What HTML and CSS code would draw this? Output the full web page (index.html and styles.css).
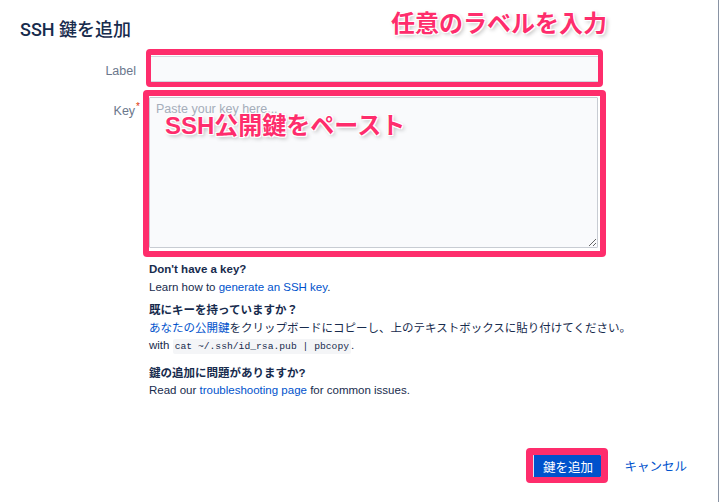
FILE: index.html
```html
<!DOCTYPE html>
<html>
<head>
    <meta charset="utf-8">
    <title>SSH 鍵を追加</title>
    <link rel="stylesheet" href="styles.css">
</head>
<body>
    <div class="dialog">
        <h1 class="dialog-title">SSH 鍵を追加</h1>
        <div class="note note-label">任意のラベルを入力</div>

        <form class="key-form">
            <label class="field-label label-row">Label</label>
            <div class="highlight highlight-label">
                <input type="text" class="text-input">
            </div>

            <label class="field-label">Key<span class="required">*</span></label>
            <div class="highlight highlight-key">
                <textarea class="key-input" placeholder="Paste your key here..."></textarea>
                <div class="note note-key">SSH公開鍵をペースト</div>
            </div>

            <div class="help">
                <p><strong>Don't have a key?</strong><br>
                Learn how to <a href="#">generate an SSH key</a>.</p>
                <p><strong>既にキーを持っていますか？</strong><br>
                <a href="#">あなたの公開鍵</a>をクリップボードにコピーし、上のテキストボックスに貼り付けてください。<br>
                with <code>cat ~/.ssh/id_rsa.pub | pbcopy</code>.</p>
                <p class="last"><strong>鍵の追加に問題がありますか?</strong><br>
                Read our <a href="#">troubleshooting page</a> for common issues.</p>
            </div>
        </form>

        <div class="dialog-footer">
            <div class="highlight highlight-button">
                <button class="button-primary">鍵を追加</button>
            </div>
            <a href="#" class="button-link">キャンセル</a>
        </div>
    </div>
</body>
</html>
```

FILE: styles.css
```css
body {
    margin: 0;
    background: #fff;
    font-family: "Liberation Sans", "Noto Sans CJK JP", sans-serif;
    color: #172b4d;
}
.dialog {
    position: relative;
    width: 719px;
    height: 502px;
    box-sizing: border-box;
    border-right: 1px solid #8993a4;
    display: flex;
    flex-direction: column;
}
.dialog-title {
    margin: 19px 0 0 20px;
    font-family: Roboto, "Noto Sans CJK JP", sans-serif;
    font-size: 18px;
    line-height: 22px;
    font-weight: 500;
    color: #172b4d;
}
.note {
    position: absolute;
    font-size: 24px;
    line-height: 24px;
    font-weight: 700;
    color: #fe2d6c;
    white-space: nowrap;
    text-shadow: -1px -1px 0 #fff, 1px -1px 0 #fff, -1px 1px 0 #fff, 1px 1px 0 #fff,
        0 0 3px #fff, 2px 2px 4px rgba(0, 0, 0, 0.3);
}
.note-label {
    left: 391px;
    top: 12px;
}
.note-key {
    left: 16px;
    top: 18px;
}
.key-form {
    display: grid;
    grid-template-columns: 136px 463px;
    column-gap: 7px;
    margin-top: 8px;
    font-size: 12.5px;
}
.field-label {
    text-align: right;
    color: #6b778c;
    padding-top: 14px;
}
.label-row {
    padding-top: 15px;
}
.required {
    color: #de350b;
    font-size: 10px;
    vertical-align: 5px;
    margin-right: -4px;
    margin-left: 1px;
}
.highlight {
    border: 6px solid #fe2d6c;
    border-radius: 4px;
    background: #fff;
}
.highlight-label {
    margin: 0 3px;
    border-width: 6px 5px 5px 5px;
    padding: 1px 0 0 0;
}
.highlight-key {
    position: relative;
    margin-top: 3px;
    padding: 1px 2px 3px 0;
}
.text-input {
    display: block;
    width: 100%;
    height: 26px;
    box-sizing: border-box;
    border: 1px solid #d3d7de;
    border-width: 1px 0 1px 0;
    background: #f9fafc;
    font: inherit;
}
.key-input {
    display: block;
    width: 449px;
    height: 151px;
    box-sizing: border-box;
    border: 1px solid #c8ccd3;
    border-radius: 1px;
    background: #f9fafc;
    padding: 4px 6px;
    font-family: inherit;
    font-size: 12.5px;
    resize: vertical;
}
.key-input::placeholder {
    color: #a5adba;
}
.help {
    grid-column: 2;
    margin-left: 6px;
    padding-top: 4px;
    font-size: 11.5px;
    line-height: 17.5px;
}
.help p {
    margin: 0 0 6px 0;
    white-space: nowrap;
}
.help p.last {
    margin-top: 9px;
}
.help a {
    color: #0052cc;
    text-decoration: none;
}
.help code {
    font-family: "Liberation Mono", monospace;
    font-size: 9.7px;
    background: #f4f5f7;
    padding: 2px 2px;
    border-radius: 2px;
}
.dialog-footer {
    margin-top: auto;
    margin-bottom: 19px;
    display: flex;
    justify-content: flex-end;
    align-items: center;
    padding-right: 31px;
}
.highlight-button {
    border-width: 7px 7px 6px 7px;
    display: flex;
}
.button-primary {
    width: 68px;
    height: 22px;
    background: #0052cc;
    color: #fff;
    border: none;
    border-left: 1px solid #d9e4f5;
    border-radius: 1px;
    font-family: inherit;
    font-size: 12.5px;
    padding: 0;
    cursor: pointer;
}
.button-link {
    margin-left: 16px;
    color: #0052cc;
    font-size: 12.5px;
    text-decoration: none;
}
```
